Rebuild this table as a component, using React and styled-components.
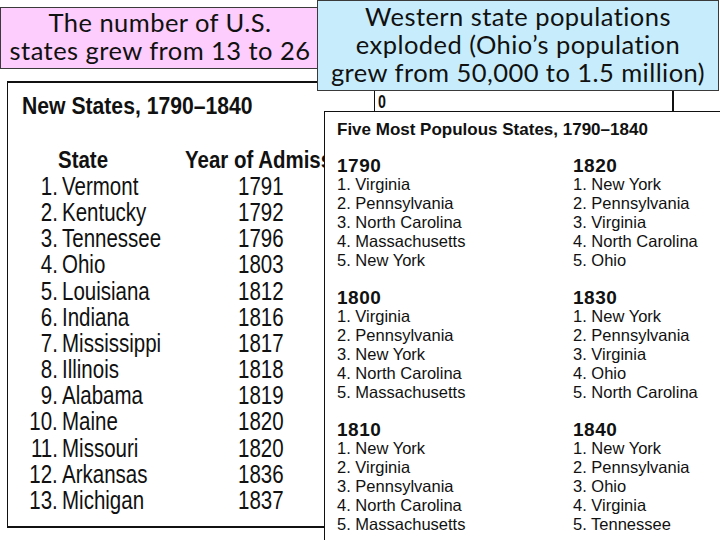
import React from "react";
import styled, { createGlobalStyle } from "styled-components";

const GlobalStyle = createGlobalStyle`
  html, body {
    margin: 0;
    padding: 0;
    background: #ffffff;
  }
  body {
    font-family: "Liberation Sans", Arial, sans-serif;
    color: #111;
  }
`;

const Slide = styled.div`
  position: relative;
  width: 720px;
  height: 540px;
  overflow: hidden;
  background: #fff;
`;

// text boxes and scanned tables lie over each other on the slide
const Callout = styled.div`
  position: absolute;
  left: ${(p) => p.left}px;
  top: ${(p) => p.top}px;
  width: ${(p) => p.width}px;
  height: ${(p) => p.height}px;
  box-sizing: border-box;
  padding-bottom: ${(p) => p.lift || 0}px;
  background: ${(p) => p.bg};
  border: 1px solid #3a3a3a;
  display: flex;
  flex-direction: column;
  justify-content: center;
  align-items: center;
  font-family: Lato, "Open Sans", sans-serif;
  font-size: 25.5px;
  letter-spacing: 0.45px;
  line-height: 28px;
  color: #111;
  z-index: ${(p) => p.z};
`;

const Line = styled.div`
  white-space: nowrap;
`;

const Card = styled.div`
  position: absolute;
  left: ${(p) => p.left}px;
  top: ${(p) => p.top}px;
  width: ${(p) => p.width}px;
  height: ${(p) => p.height}px;
  box-sizing: border-box;
  background: #fff;
  overflow: hidden;
  z-index: ${(p) => p.z};
`;

// its right part lies under the other table
const NewStatesCard = styled(Card)`
  border: 2px solid #111;
  border-left-width: 1px;
  border-right: none;
  padding: 10px 0 0 14px;
`;

const FragmentCard = styled(Card)`
  border-left: 1px solid #111;
  border-right: 2px solid #111;
  padding: 4px 0 0 3px;
`;

const PopulousCard = styled(Card)`
  border: 1px solid #111;
  border-right: none;
  border-bottom: none;
  padding: 9px 0 0 12px;
`;

// the scanned tables use a condensed face
const Squeeze = styled.span`
  display: inline-block;
  white-space: nowrap;
  transform: scaleX(${(p) => p.sx});
  transform-origin: ${(p) => p.origin || "left"} center;
`;

const Fragment = styled.div`
  font-weight: bold;
  font-size: 19px;
  line-height: 19px;
`;

const BigTitle = styled.div`
  font-weight: bold;
  font-size: 23px;
  line-height: 26px;
`;

const HeaderRow = styled.div`
  display: grid;
  grid-template-columns: 163px auto;
  height: 26.2px;
  align-items: center;
  margin-top: 28px;
  font-weight: bold;
  font-size: 23px;
`;

const HeadCell = styled.div`
  padding-left: ${(p) => p.pad || 0}px;
  white-space: nowrap;
`;

const AdmitTable = styled.div`
  display: grid;
  grid-template-columns: 36px 180px 80px;
  grid-auto-rows: 26.2px;
  align-items: center;
  font-size: 25px;
`;

const Num = styled.div`
  text-align: right;
`;

const Name = styled.div`
  padding-left: 4px;
`;

const Year = styled.div``;

const SmallTitle = styled.div`
  font-weight: bold;
  font-size: 17px;
  line-height: 18px;
  white-space: nowrap;
`;

const DecadeGrid = styled.div`
  display: grid;
  grid-template-columns: 236px 236px;
  row-gap: 18px;
  margin-top: 17px;
`;

const Decade = styled.div`
  display: flex;
  flex-direction: column;
`;

const DecadeYear = styled.div`
  font-weight: bold;
  font-size: 19px;
  line-height: 19px;
  letter-spacing: 0.5px;
`;

const Rank = styled.div`
  font-size: 16.5px;
  line-height: 19px;
  white-space: nowrap;
`;

const admissions = [
  ["1.", "Vermont", "1791"],
  ["2.", "Kentucky", "1792"],
  ["3.", "Tennessee", "1796"],
  ["4.", "Ohio", "1803"],
  ["5.", "Louisiana", "1812"],
  ["6.", "Indiana", "1816"],
  ["7.", "Mississippi", "1817"],
  ["8.", "Illinois", "1818"],
  ["9.", "Alabama", "1819"],
  ["10.", "Maine", "1820"],
  ["11.", "Missouri", "1820"],
  ["12.", "Arkansas", "1836"],
  ["13.", "Michigan", "1837"],
];

// listed row by row: left column then right column
const decades = [
  ["1790", ["Virginia", "Pennsylvania", "North Carolina", "Massachusetts", "New York"]],
  ["1820", ["New York", "Pennsylvania", "Virginia", "North Carolina", "Ohio"]],
  ["1800", ["Virginia", "Pennsylvania", "New York", "North Carolina", "Massachusetts"]],
  ["1830", ["New York", "Pennsylvania", "Virginia", "Ohio", "North Carolina"]],
  ["1810", ["New York", "Virginia", "Pennsylvania", "North Carolina", "Massachusetts"]],
  ["1840", ["New York", "Pennsylvania", "Ohio", "Virginia", "Tennessee"]],
];

const App = () => {
  return (
    <Slide>
      <GlobalStyle />

      <NewStatesCard left={7} top={81} width={318} height={447} z={1}>
        <BigTitle>
          <Squeeze sx={0.92}>New States, 1790–1840</Squeeze>
        </BigTitle>
        <HeaderRow>
          <HeadCell pad={36}>
            <Squeeze sx={0.89}>State</Squeeze>
          </HeadCell>
          <HeadCell>
            <Squeeze sx={0.89}>Year of Admission</Squeeze>
          </HeadCell>
        </HeaderRow>
        <AdmitTable>
          {admissions.map((row, index) => (
            <React.Fragment key={index}>
              <Num>
                <Squeeze sx={0.82} origin="right">{row[0]}</Squeeze>
              </Num>
              <Name>
                <Squeeze sx={0.82}>{row[1]}</Squeeze>
              </Name>
              <Year>
                <Squeeze sx={0.82}>{row[2]}</Squeeze>
              </Year>
            </React.Fragment>
          ))}
        </AdmitTable>
      </NewStatesCard>

      <FragmentCard left={374} top={88} width={300} height={40} z={2}>
        <Fragment>
          <Squeeze sx={0.75}>0</Squeeze>
        </Fragment>
      </FragmentCard>

      <PopulousCard left={324} top={111} width={420} height={450} z={3}>
        <SmallTitle>Five Most Populous States, 1790–1840</SmallTitle>
        <DecadeGrid>
          {decades.map((d) => (
            <Decade key={d[0]}>
              <DecadeYear>{d[0]}</DecadeYear>
              {d[1].map((state, index) => (
                <Rank key={index}>
                  {index + 1}. {state}
                </Rank>
              ))}
            </Decade>
          ))}
        </DecadeGrid>
      </PopulousCard>

      <Callout left={0} top={7} width={320} height={62} lift={5} bg="#fdcdfd" z={4}>
        <Line>The number of U.S.</Line>
        <Line>states grew from 13 to 26</Line>
      </Callout>

      <Callout left={317} top={0} width={402} height={91} lift={3} bg="#c7edfc" z={5}>
        <Line>Western state populations</Line>
        <Line>exploded (Ohio’s population</Line>
        <Line>grew from 50,000 to 1.5 million)</Line>
      </Callout>
    </Slide>
  );
};

export default App;
